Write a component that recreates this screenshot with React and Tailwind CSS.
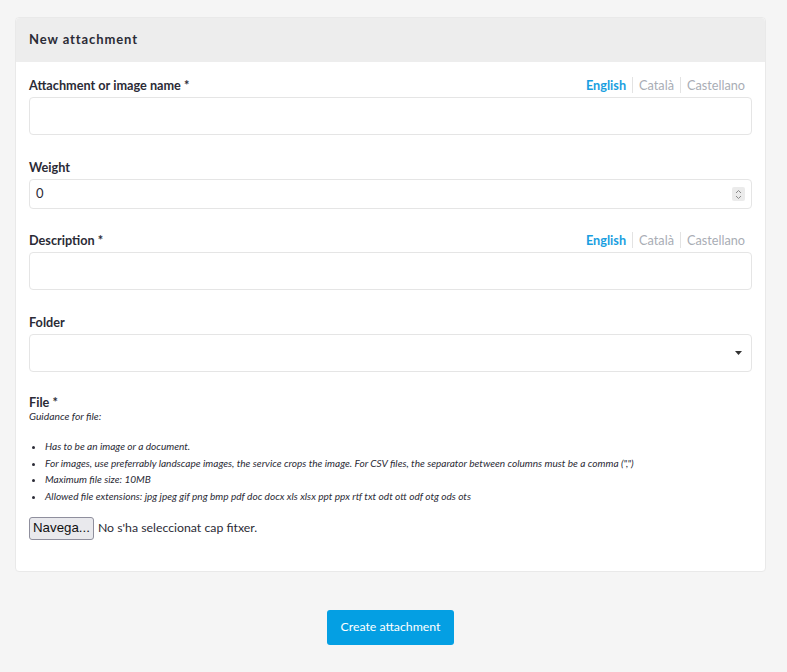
import React from "react";

const font = { fontFamily: "Lato, 'Noto Sans', sans-serif" };

function LangTabs() {
  return (
    <div className="flex items-center text-[12.7px] leading-[18px]">
      <span className="font-bold text-[#1a9ee0]">English</span>
      <span className="mx-[6px] h-[16px] w-px bg-[#e3e3e3]" />
      <span className="text-[#a9adb5]">Català</span>
      <span className="mx-[6px] h-[16px] w-px bg-[#e3e3e3]" />
      <span className="text-[#a9adb5]">Castellano</span>
    </div>
  );
}

function Label({ children, tabs }) {
  return (
    <div className="flex items-center justify-between pr-[7px]">
      <span className="text-[12.7px] font-bold leading-[18px] text-[#2b2b36]">{children}</span>
      {tabs && <LangTabs />}
    </div>
  );
}

export default function App() {
  return (
    <div className="min-h-[672px] bg-[#f5f5f5] pl-[15px] pr-[21px] pt-[17px]" style={font}>
      <div className="rounded-[4px] border border-[#e9e9e9] bg-white">
        <div className="flex h-[44px] items-center rounded-t-[4px] bg-[#ededed] px-[13px] text-[13px] font-bold tracking-[0.07em] text-[#2b2b36]">
          New attachment
        </div>
        <div className="px-[13px] pb-[31px] pt-[14px]">
          <Label tabs>Attachment or image name *</Label>
          <div className="mt-[3px] h-[38px] rounded-[4px] border border-[#e5e5e5]" />

          <div className="mt-[23px]">
            <Label>Weight</Label>
          </div>
          <div className="mt-[3px] flex h-[30px] items-center justify-between rounded-[4px] border border-[#e5e5e5] pl-[6px] pr-[6px]">
            <span className="text-[13px] text-[#2b2b36]">0</span>
            <span className="flex h-[14px] w-[13px] flex-col items-center justify-center rounded-[2px] bg-[#ebebeb]">
              <svg width="7" height="11" viewBox="0 0 7 11" fill="none" stroke="#8a8a8a" strokeWidth="1">
                <path d="M1 4 L3.5 1.5 L6 4" />
                <path d="M1 7 L3.5 9.5 L6 7" />
              </svg>
            </span>
          </div>

          <div className="mt-[22px]">
            <Label tabs>Description *</Label>
          </div>
          <div className="mt-[3px] h-[38px] rounded-[4px] border border-[#e5e5e5]" />

          <div className="mt-[23px]">
            <Label>Folder</Label>
          </div>
          <div className="mt-[3px] flex h-[38px] items-center justify-end rounded-[4px] border border-[#e5e5e5] pr-[9px]">
            <svg width="7" height="4" viewBox="0 0 7 4">
              <path d="M0 0 H7 L3.5 4 Z" fill="#333" />
            </svg>
          </div>

          <div className="mt-[21px]">
            <Label>File *</Label>
          </div>
          <div className="-mt-[2px] text-[10.3px] italic leading-[14px] text-[#2b2b36]">Guidance for file:</div>
          <ul className="mt-[15px] list-disc pl-[16px] text-[10.1px] italic leading-[16.7px] text-[#2b2b36]">
            <li>Has to be an image or a document.</li>
            <li>For images, use preferrably landscape images, the service crops the image. For CSV files, the separator between columns must be a comma (",")</li>
            <li>Maximum file size: 10MB</li>
            <li>Allowed file extensions: jpg jpeg gif png bmp pdf doc docx xls xlsx ppt ppx rtf txt odt ott odf otg ods ots</li>
          </ul>
          <div className="mt-[12px] flex items-center">
            <span
              className="flex h-[23px] items-center rounded-[3px] border border-[#8f8f9d] bg-[#e9e9ed] px-[3px] text-[13.3px] text-[#111]"
              style={{ fontFamily: "'Liberation Sans', sans-serif" }}
            >
              Navega...
            </span>
            <span className="ml-[4px] text-[12.3px] text-[#2b2b36]">No s'ha seleccionat cap fitxer.</span>
          </div>
        </div>
      </div>
      <div className="flex justify-center pt-[38px]">
        <button className="h-[35px] rounded-[3px] bg-[#049fe3] px-[13px] text-[12.3px] text-white">
          Create attachment
        </button>
      </div>
    </div>
  );
}
